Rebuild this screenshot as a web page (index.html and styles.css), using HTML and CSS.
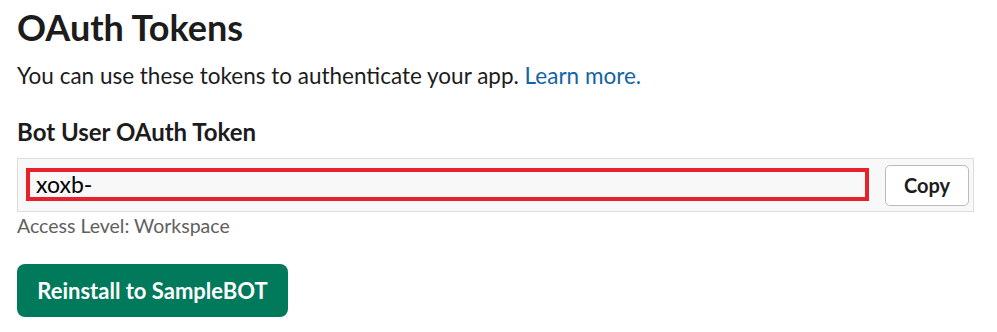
FILE: index.html
```html
<!DOCTYPE html>
<html lang="en">
<head>
<meta charset="utf-8">
<title>OAuth Tokens</title>
<link rel="stylesheet" href="styles.css">
</head>
<body>
<main class="page">
  <h1 class="title">OAuth Tokens</h1>
  <p class="intro">You can use these tokens to authenticate your app. <a class="link" href="#">Learn more.</a></p>
  <h2 class="label">Bot User OAuth Token</h2>
  <div class="token-box">
    <div class="token-field">xoxb-</div>
    <button class="copy-btn" type="button">Copy</button>
  </div>
  <div class="access">Access Level: Workspace</div>
  <button class="reinstall-btn" type="button">Reinstall to SampleBOT</button>
</main>
</body>
</html>
```

FILE: styles.css
```css
html, body {
  margin: 0;
  padding: 0;
  background: #ffffff;
}

body {
  font-family: Lato, "Open Sans", "Liberation Sans", sans-serif;
  color: #1d1c1d;
}

.page {
  padding: 5px 23px 0 17px;
  display: flex;
  flex-direction: column;
  align-items: flex-start;
}

.title {
  margin: 0;
  font-size: 36px;
  line-height: 44px;
  font-weight: 700;
}

.intro {
  margin: 12px 0 0;
  font-size: 22.5px;
  line-height: 30px;
}

.link {
  color: #1264a3;
  text-decoration: none;
}

.label {
  margin: 26px 0 0;
  font-size: 24px;
  line-height: 30px;
  font-weight: 700;
}

.token-box {
  align-self: stretch;
  box-sizing: border-box;
  margin-top: 11px;
  height: 54px;
  border: 1px solid #dddddd;
  background: #f8f8f8;
  display: flex;
  align-items: center;
  gap: 16px;
  padding: 0 4px 0 8px;
}

.token-field {
  flex: 1;
  box-sizing: border-box;
  height: 33px;
  margin-top: -2px;
  border: 4px solid #e8202a;
  padding: 0 6px;
  font-size: 23px;
  line-height: 25px;
  color: #000000;
}

.copy-btn {
  box-sizing: border-box;
  width: 84px;
  height: 41px;
  border: 1px solid #bbbbbb;
  border-radius: 5px;
  background: #ffffff;
  font-family: inherit;
  font-size: 20px;
  font-weight: 700;
  color: #1d1c1d;
  padding: 0;
}

.access {
  margin-top: 1.5px;
  font-size: 19.5px;
  line-height: 24px;
  color: #616061;
}

.reinstall-btn {
  margin-top: 26.5px;
  box-sizing: border-box;
  width: 271px;
  height: 53px;
  border: none;
  border-radius: 8px;
  background: #007a5a;
  color: #ffffff;
  font-family: inherit;
  font-size: 22px;
  font-weight: 700;
  padding: 0;
}
```
